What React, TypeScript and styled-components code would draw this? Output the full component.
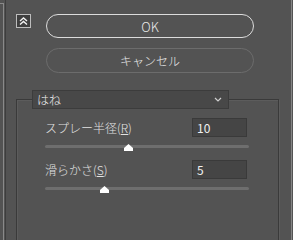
import React from "react";
import styled, { createGlobalStyle } from "styled-components";

const GlobalStyle = createGlobalStyle`
  html, body {
    margin: 0;
    padding: 0;
    background: #535353;
  }
  body {
    font-family: "Noto Sans CJK JP", "Noto Sans", sans-serif;
    color: #e4e4e4;
  }
`;

const Page = styled.div`
  display: flex;
  width: 293px;
  height: 240px;
  background: #535353;
  overflow: hidden;
`;

const LeftEdge = styled.div`
  width: 3px;
  margin-top: 3px;
  border-top: 1px solid #8a8a8a;
  border-right: 1px solid #8a8a8a;
`;

const Main = styled.div`
  flex: 1;
  display: flex;
  flex-direction: column;
  margin: 0 1px;
  border-left: 1px solid #3e3e3e;
  border-right: 1px solid #858585;
`;

const TopRow = styled.div`
  display: flex;
  align-items: flex-start;
  gap: 15px;
  padding: 14px 0 0 10px;
`;

const CollapseButton = styled.button`
  display: flex;
  align-items: center;
  justify-content: center;
  width: 15px;
  height: 14px;
  padding: 0;
  background: #3f3f3f;
  border: 1px solid #bdbdbd;
  box-sizing: border-box;
`;

const Buttons = styled.div`
  display: flex;
  flex-direction: column;
  gap: 10px;
  width: 208px;
`;

const PillButton = styled.button<{ $primary?: boolean }>`
  height: ${(p) => (p.$primary ? "24px" : "25px")};
  border-radius: 13px;
  background: transparent;
  border: ${(p) => (p.$primary ? "1.5px solid #dcdcdc" : "1.5px solid #6c6c6c")};
  color: #e8e8e8;
  font-family: "Noto Sans CJK JP", "Noto Sans", sans-serif;
  font-size: ${(p) => (p.$primary ? "13px" : "12px")};
  font-weight: 300;
  line-height: 1;
  padding: 0;
`;

const Group = styled.fieldset`
  flex: 1;
  margin: 17px 0 -20px 10px;
  width: 263px;
  box-sizing: border-box;
  padding: 0 0 20px 15px;
  border: 1px solid #3a3a3a;
  box-shadow: inset 1px 1px 0 #5c5c5c, 1px 1px 0 #5c5c5c;
  min-inline-size: 0;
`;

const Legend = styled.legend`
  width: 197px;
  height: 19px;
  box-sizing: border-box;
  display: flex;
  align-items: center;
  justify-content: space-between;
  padding: 0 6px 0 4px;
  background: #484848;
  border: 1px solid #3c3c3c;
  font-size: 12px;
  font-weight: 300;
  color: #ececec;
`;

const Fields = styled.div`
  display: flex;
  flex-direction: column;
  padding-left: 13px;
  width: 202px;
`;

const Field = styled.div`
  margin-top: 9px;
  & + & {
    margin-top: 9px;
  }
`;

const Row = styled.div`
  display: flex;
  align-items: center;
  justify-content: space-between;
  height: 19px;
`;

const Label = styled.span`
  font-size: 12px;
  font-weight: 300;
  color: #e2e2e2;
  & u {
    text-decoration-thickness: 1px;
    text-underline-offset: 1px;
  }
`;

const NumberBox = styled.div`
  width: 55px;
  height: 19px;
  box-sizing: border-box;
  background: #454545;
  border: 1px solid #3a3a3a;
  padding: 0 4px;
  display: flex;
  align-items: center;
  font-size: 12px;
  color: #f0f0f0;
`;

const Slider = styled.div`
  position: relative;
  height: 9px;
  margin-top: 5px;
  width: 204px;
  display: flex;
  align-items: center;
`;

const Track = styled.div`
  width: 100%;
  height: 3px;
  border-radius: 2px;
  background: #6e6e6e;
`;

const Thumb = styled.svg`
  position: absolute;
  top: 2px;
  width: 9px;
  height: 7px;
  margin-left: -4px;
`;

function DoubleChevron() {
  return (
    <svg width="9" height="8" viewBox="0 0 9 8">
      <path d="M1 4 L4.5 1 L8 4 M1 7.5 L4.5 4.5 L8 7.5" stroke="#f2f2f2" strokeWidth="1.4" fill="none" />
    </svg>
  );
}

function Chevron() {
  return (
    <svg width="8" height="5" viewBox="0 0 8 5">
      <path d="M1 1 L4 4 L7 1" stroke="#cfcfcf" strokeWidth="1.2" fill="none" />
    </svg>
  );
}

function SliderField({ label, hotkey, value, pct }: { label: string; hotkey: string; value: string; pct: number }) {
  return (
    <Field>
      <Row>
        <Label>
          {label}(<u>{hotkey}</u>)
        </Label>
        <NumberBox>{value}</NumberBox>
      </Row>
      <Slider>
        <Track />
        <Thumb viewBox="0 0 9 7" style={{ left: `${pct}%` }}>
          <polygon points="4.5,0 9,4 9,7 0,7 0,4" fill="#ffffff" />
        </Thumb>
      </Slider>
    </Field>
  );
}

export default function App() {
  return (
    <Page>
      <GlobalStyle />
      <LeftEdge />
      <Main>
        <TopRow>
          <CollapseButton>
            <DoubleChevron />
          </CollapseButton>
          <Buttons>
            <PillButton $primary>OK</PillButton>
            <PillButton>キャンセル</PillButton>
          </Buttons>
        </TopRow>
        <Group>
          <Legend>
            <span>はね</span>
            <Chevron />
          </Legend>
          <Fields>
            <SliderField label="スプレー半径" hotkey="R" value="10" pct={40.7} />
            <SliderField label="滑らかさ" hotkey="S" value="5" pct={28.9} />
          </Fields>
        </Group>
      </Main>
    </Page>
  );
}
